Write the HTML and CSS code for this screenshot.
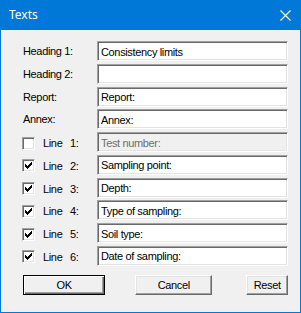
FILE: index.html
```html
<!DOCTYPE html>
<html lang="en">
<head>
  <meta charset="UTF-8">
  <meta name="viewport" content="width=device-width, initial-scale=1.0">
  <title>Texts</title>
  <link rel="stylesheet" href="styles.css">
</head>
<body>
  <div class="window">
    <div class="titlebar">
      <span class="title">Texts</span>
      <svg class="close" width="11" height="11" viewBox="0 0 11 11">
        <path d="M0.5 0.5L10.5 10.5M10.5 0.5L0.5 10.5" stroke="#fff" stroke-width="1.1" fill="none"/>
      </svg>
    </div>

    <div class="dialog">
      <div class="fields">
        <label class="label">Heading 1:</label>
        <input class="field" type="text" value="Consistency limits">

        <label class="label">Heading 2:</label>
        <input class="field" type="text" value="">

        <label class="label">Report:</label>
        <input class="field" type="text" value="Report:">

        <label class="label">Annex:</label>
        <input class="field" type="text" value="Annex:">

        <label class="check-label"><span class="checkbox"></span><span class="line-word">Line</span>1:</label>
        <input class="field" type="text" value="Test number:" disabled>

        <label class="check-label"><span class="checkbox checked"></span><span class="line-word">Line</span>2:</label>
        <input class="field" type="text" value="Sampling point:">

        <label class="check-label"><span class="checkbox checked"></span><span class="line-word">Line</span>3:</label>
        <input class="field" type="text" value="Depth:">

        <label class="check-label"><span class="checkbox checked"></span><span class="line-word">Line</span>4:</label>
        <input class="field" type="text" value="Type of sampling:">

        <label class="check-label"><span class="checkbox checked"></span><span class="line-word">Line</span>5:</label>
        <input class="field" type="text" value="Soil type:">

        <label class="check-label"><span class="checkbox checked"></span><span class="line-word">Line</span>6:</label>
        <input class="field" type="text" value="Date of sampling:">
      </div>

      <div class="buttons">
        <button class="btn btn-ok">OK</button>
        <button class="btn btn-cancel">Cancel</button>
        <button class="btn btn-reset">Reset</button>
      </div>
    </div>
  </div>
</body>
</html>
```

FILE: styles.css
```css
* {
  box-sizing: border-box;
  margin: 0;
  padding: 0;
}

body {
  font-family: "Liberation Sans", Arial, sans-serif;
  font-size: 11px;
  letter-spacing: -0.35px;
  color: #000;
  background: #fff;
}

.window {
  width: 301px;
  height: 313px;
  display: flex;
  flex-direction: column;
  background-color: #0078d7;
  padding: 0 1px 1px 1px;
}

.titlebar {
  height: 30px;
  display: flex;
  align-items: center;
  justify-content: space-between;
  padding: 0 9px 0 8px;
  color: #fff;
}

.title {
  font-family: "Noto Sans", "Open Sans", sans-serif;
  font-size: 12px;
  letter-spacing: 0;
  margin-top: -1px;
}

.close {
  display: block;
}

.dialog {
  flex: 1;
  background-color: #f0f0f0;
  padding: 11px 12px 0 21px;
}

.fields {
  display: grid;
  grid-template-columns: 75px 1fr;
  grid-auto-rows: 20px;
  row-gap: 2.75px;
  align-items: center;
}

.label {
  padding-left: 1px;
}

.check-label {
  display: flex;
  align-items: center;
  padding-top: 2px;
}

.checkbox {
  width: 13px;
  height: 13px;
  margin-right: 8px;
  background-color: #fff;
  border: 1px solid;
  border-color: #a0a0a0 #fff #fff #a0a0a0;
  box-shadow: inset 1px 1px #696969, inset -1px -1px #e3e3e3;
  position: relative;
}

.checkbox.checked::after {
  content: "";
  position: absolute;
  left: 2px;
  top: 2px;
  width: 7px;
  height: 7px;
  background: url("data:image/svg+xml,%3Csvg xmlns='http://www.w3.org/2000/svg' width='7' height='7' viewBox='0 0 7 7' shape-rendering='crispEdges'%3E%3Cpath d='M0 2h1v3H0zM1 3h1v3H1zM2 4h1v3H2zM3 3h1v3H3zM4 2h1v3H4zM5 1h1v3H5zM6 0h1v3H6z' fill='%23000'/%3E%3C/svg%3E");
}

.line-word {
  display: inline-block;
  width: 27px;
}

.field {
  height: 20px;
  width: 100%;
  font-family: "Liberation Sans", Arial, sans-serif;
  font-size: 11px;
  letter-spacing: -0.35px;
  color: #000;
  background-color: #fff;
  border: 1px solid;
  border-color: #a0a0a0 #fff #fff #a0a0a0;
  box-shadow: inset 1px 1px #696969, inset -1px -1px #e3e3e3;
  padding: 1px 3px 0 3px;
  outline: none;
}

.field:disabled {
  background-color: #f0f0f0;
  color: #6d6d6d;
}

.buttons {
  display: flex;
  margin-top: 9px;
  margin-left: 1px;
}

.btn {
  height: 20px;
  font-family: "Liberation Sans", Arial, sans-serif;
  font-size: 11px;
  letter-spacing: -0.35px;
  color: #000;
  background-color: #f0f0f0;
  border: 1px solid;
  border-color: #fff #696969 #696969 #fff;
  box-shadow: inset -1px -1px #a0a0a0, inset 1px 1px #e3e3e3;
  padding-top: 1px;
}

.btn-ok {
  width: 83px;
  border: 1px solid #000;
  box-shadow: inset 1px 1px #fff, inset -1px -1px #696969, inset -2px -2px #a0a0a0;
}

.btn-cancel {
  width: 78px;
  margin-left: 30px;
}

.btn-reset {
  width: 42px;
  margin-left: 34px;
}
```
